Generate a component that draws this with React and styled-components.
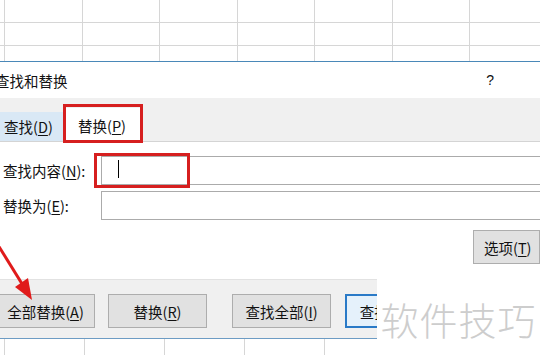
import React from 'react'
import styled, { createGlobalStyle } from 'styled-components'

const GlobalStyle = createGlobalStyle`
body {
  margin: 0;
  background: #fff;
  font-family: "Noto Sans CJK SC", "Noto Sans", sans-serif;
}
`;

const Page = styled.div`
position: relative;
width: 540px;
height: 360px;
overflow: hidden;
display: flex;
flex-direction: column;
background: #fff;
`;

const Sheet = styled.div`
display: grid;
grid-template-columns: 5px repeat(8, ${({$col}) => $col}px);
grid-auto-rows: ${({$row}) => $row}px;
height: ${({$h}) => $h}px;
overflow: hidden;
flex-shrink: 0;
`;

const Cell = styled.div`
border-right: 1px solid #d6d6d6;
border-bottom: 1px solid #d6d6d6;
`;

const Dialog = styled.div`
background: #fff;
border-top: 1px solid #4a88b8;
display: flex;
flex-direction: column;
flex-shrink: 0;
`;

const TitleBar = styled.div`
height: 36px;
display: flex;
align-items: center;
justify-content: space-between;
padding: 0 46px 0 0;
font-size: 14.5px;
color: #111;
overflow: hidden;
`;

const Title = styled.span`
margin-left: -5px;
`;

const Help = styled.span`
font-family: "Liberation Sans", sans-serif;
font-size: 14px;
`;

const TabStrip = styled.div`
height: 43px;
background: #f0f0f0;
border-bottom: 1px solid #d4d4d4;
display: flex;
align-items: flex-end;
gap: 3px;
`;

const Tab = styled.div`
position: relative;
height: ${({$active}) => ($active ? 34 : 29)}px;
margin-bottom: ${({$active}) => ($active ? -1 : 0)}px;
width: ${({$active}) => ($active ? 74 : 63)}px;
background: ${({$active}) => ($active ? '#fff' : '#d9e8f5')};
display: flex;
align-items: center;
padding-left: ${({$active}) => ($active ? 12 : 4)}px;
box-sizing: border-box;
font-size: 14.5px;
color: #111;
`;

const Key = styled.span`
text-decoration: underline;
text-underline-offset: 2px;
`;

const Highlight = styled.div`
position: absolute;
left: ${({$l}) => $l}px;
top: ${({$t}) => $t}px;
width: ${({$w}) => $w}px;
height: ${({$h}) => $h}px;
border: 3px solid #d61f1f;
box-sizing: border-box;
pointer-events: none;
`;

const Content = styled.div`
padding-top: 14px;
display: flex;
flex-direction: column;
gap: 6px;
`;

const Row = styled.div`
display: flex;
align-items: center;
height: 29px;
`;

const Label = styled.div`
width: 101px;
padding-left: 3px;
box-sizing: border-box;
font-size: 14.5px;
color: #111;
`;

const Field = styled.div`
position: relative;
flex: 1;
height: 29px;
box-sizing: border-box;
border: 1px solid #ababab;
border-right: none;
`;

const Caret = styled.div`
position: absolute;
left: 16px;
top: 3px;
width: 1px;
height: 18px;
background: #000;
`;

const OptionsRow = styled.div`
display: flex;
justify-content: flex-end;
margin-top: 10px;
margin-bottom: 15px;
`;

const Button = styled.div`
height: 34px;
width: ${({$w}) => $w || 99}px;
margin-left: ${({$ml}) => $ml || 0}px;
flex-shrink: 0;
box-sizing: border-box;
border: ${({$primary}) => ($primary ? '2px solid #2a7ac7' : '1px solid #adadad')};
background: ${({$primary}) => ($primary ? '#e5f1fb' : '#e1e1e1')};
display: flex;
align-items: center;
justify-content: ${({$start}) => ($start ? 'flex-start' : 'center')};
padding-left: ${({$start}) => ($start ? 10 : 0)}px;
font-size: 14.5px;
color: #111;
white-space: nowrap;
overflow: hidden;
`;

const BottomRow = styled.div`
display: flex;
border-bottom: 1px solid #6d9cc4;
width: 377px;
`;

const ButtonBar = styled.div`
width: 377px;
height: 59px;
background: #f0f0f0;
border-top: 1px solid #e2e2e2;
display: flex;
align-items: flex-start;
padding-top: 14px;
box-sizing: border-box;
overflow: hidden;
`;

const Watermark = styled.div`
position: absolute;
left: 377px;
top: 284px;
width: 163px;
height: 76px;
background: #fff;
display: flex;
align-items: center;
justify-content: center;
padding-bottom: 8px;
box-sizing: border-box;
font-size: 38px;
letter-spacing: 1px;
color: #cdcdcd;
font-weight: 300;
`;

const Arrow = styled.svg`
position: absolute;
left: 0;
top: 240px;
width: 40px;
height: 65px;
`;

function SheetBlock({col, row, rows, h}) {
  const cells = Array.from({length: rows * 9})
  return (
    <Sheet $col={col} $row={row} $h={h}>
      {cells.map((_, i) => <Cell key={i} />)}
    </Sheet>
  )
}

function App() {
  return (
    <Page>
      <GlobalStyle />
      <SheetBlock col={77.5} row={23} rows={3} h={61} />
      <Dialog>
        <TitleBar>
          <Title>查找和替换</Title>
          <Help>?</Help>
        </TitleBar>
        <TabStrip>
          <Tab>查找(<Key>D</Key>)</Tab>
          <Tab $active>
            替换(<Key>P</Key>)
            <Highlight $l={-3} $t={-4} $w={80} $h={39} />
          </Tab>
        </TabStrip>
        <Content>
          <Row>
            <Label>查找内容(<Key>N</Key>):</Label>
            <Field>
              <Caret />
              <Highlight $l={-8} $t={-4} $w={96} $h={35} />
            </Field>
          </Row>
          <Row>
            <Label>替换为(<Key>E</Key>):</Label>
            <Field />
          </Row>
        </Content>
        <OptionsRow>
          <Button $w={67} $start>选项(<Key>T</Key>)</Button>
        </OptionsRow>
        <BottomRow>
          <ButtonBar>
            <Button $ml={-4}>全部替换(<Key>A</Key>)</Button>
            <Button $ml={13}>替换(<Key>R</Key>)</Button>
            <Button $ml={25}>查找全部(<Key>I</Key>)</Button>
            <Button $ml={14} $primary $w={120}>查找下一个(<Key>F</Key>)</Button>
          </ButtonBar>
        </BottomRow>
      </Dialog>
      <SheetBlock col={80} row={23} rows={1} h={16} />
      <Watermark>软件技巧</Watermark>
      <Arrow viewBox="0 0 40 65">
        <line x1="-2" y1="5" x2="24" y2="47" stroke="#e01b1b" strokeWidth="3" />
        <polygon points="32,60 15,47 28,38" fill="#e01b1b" />
      </Arrow>
    </Page>
  )
}

export default App
